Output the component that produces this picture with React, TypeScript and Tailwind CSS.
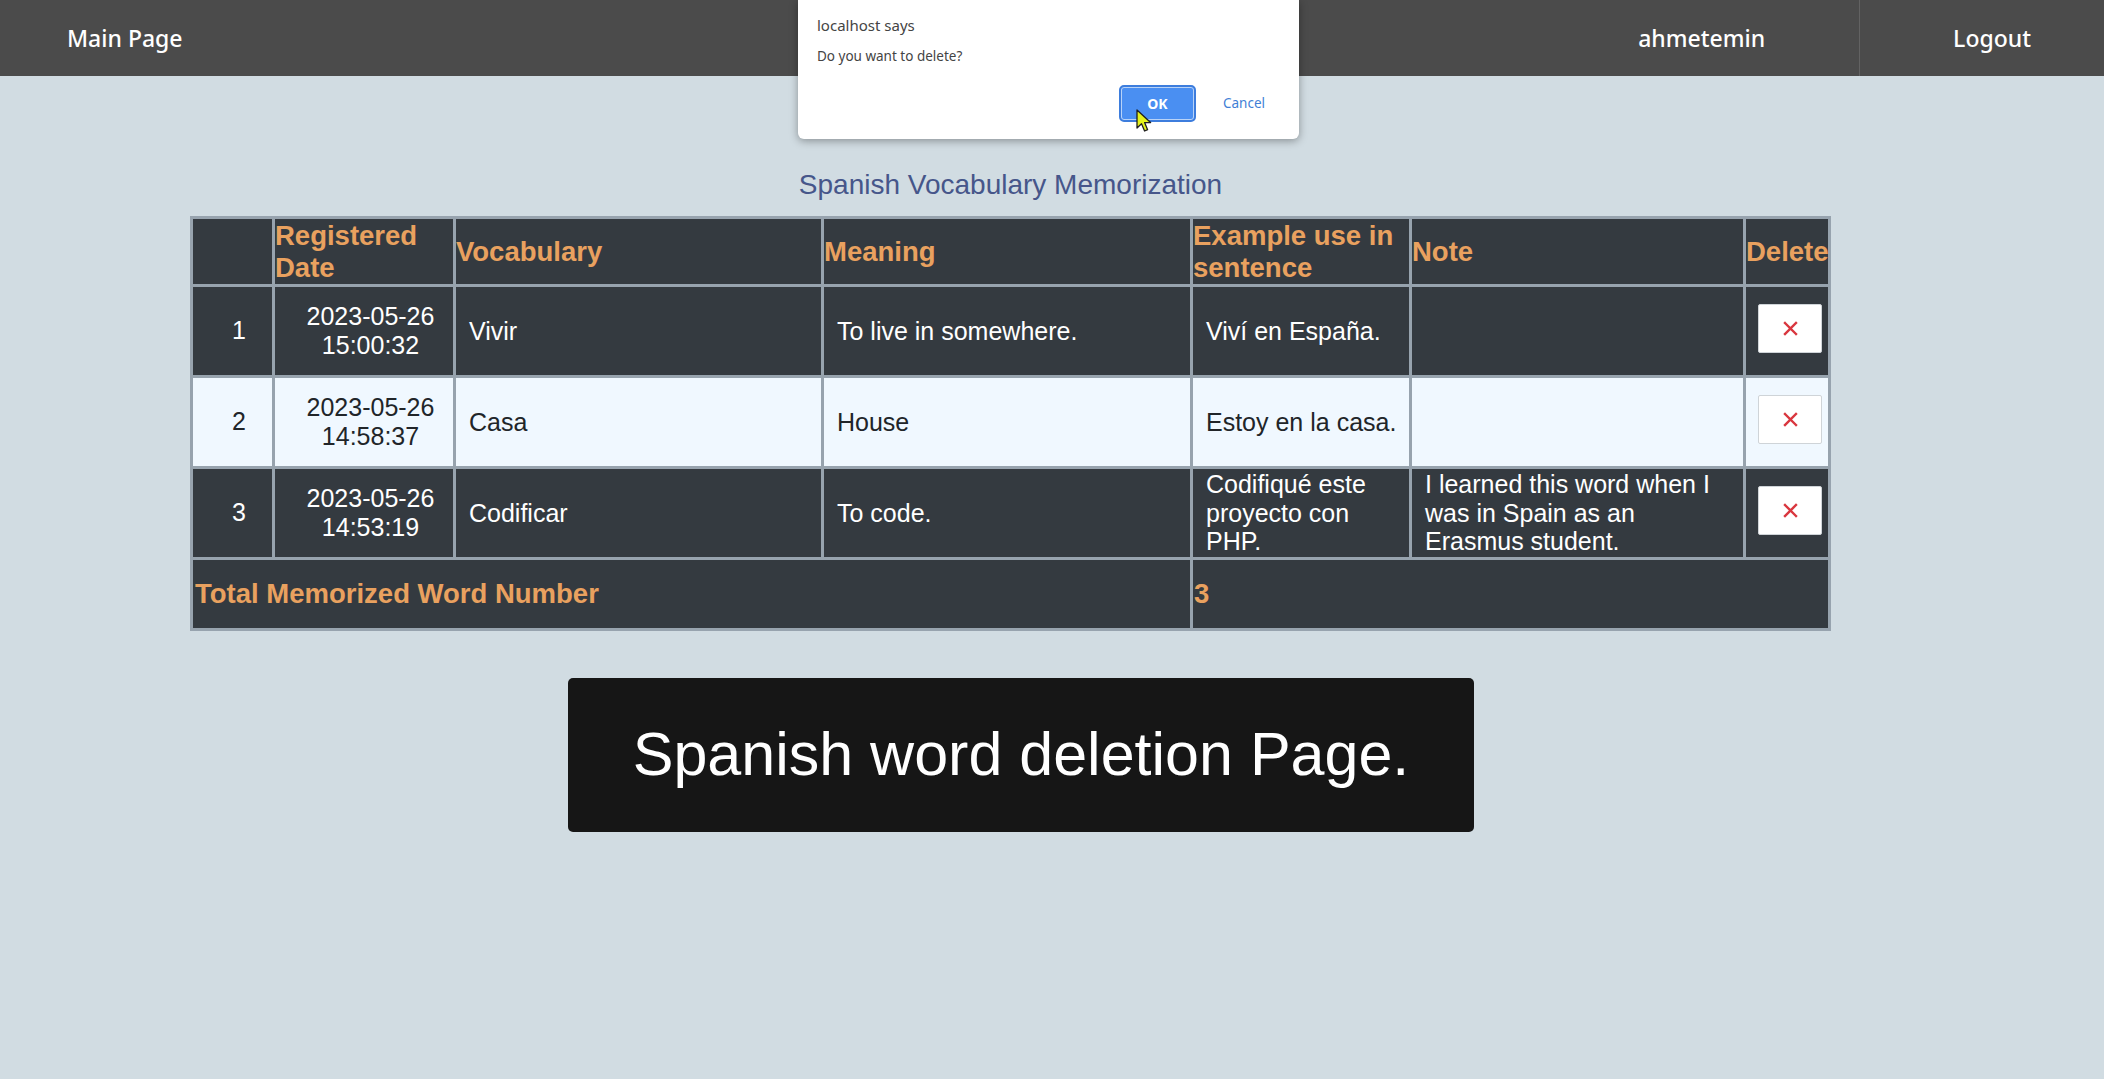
import React from 'react';

type Row = {
  id: number;
  date: string;
  word: string;
  meaning: string;
  example: string;
  note: string;
};

const rows: Row[] = [
  { id: 1, date: '2023-05-26 15:00:32', word: 'Vivir', meaning: 'To live in somewhere.', example: 'Viví en España.', note: '' },
  { id: 2, date: '2023-05-26 14:58:37', word: 'Casa', meaning: 'House', example: 'Estoy en la casa.', note: '' },
  {
    id: 3,
    date: '2023-05-26 14:53:19',
    word: 'Codificar',
    meaning: 'To code.',
    example: 'Codifiqué este proyecto con PHP.',
    note: 'I learned this word when I was in Spain as an Erasmus student.',
  },
];

function Cursor() {
  return (
    <svg className="absolute left-[337px] top-[108px]" width="20" height="26" viewBox="0 0 20 26">
      <path
        d="M2 2 L2 20 L6.5 15.8 L9.6 23 L12.6 21.7 L9.6 14.6 L15.6 14.6 Z"
        fill="#e4f21c"
        stroke="#1e1e1e"
        strokeWidth="1.3"
        strokeLinejoin="round"
      />
    </svg>
  );
}

function ConfirmDialog() {
  return (
    <div className="absolute left-[798px] top-0 h-[139px] w-[501px] rounded-b-[6px] bg-white shadow-[0_2px_8px_rgba(0,0,0,0.35)] font-['Noto_Sans',sans-serif]">
      <div className="pl-[19px] pt-[14px] text-[15px] leading-[22px] text-[#444]">localhost says</div>
      <div className="pl-[19px] pt-[10px] text-[13.5px] leading-[20px] text-[#444]">Do you want to delete?</div>
      <div className="mt-[19px] flex items-center justify-end pr-[34px]">
        <div className="flex h-[37px] w-[77px] items-center justify-center rounded-[5px] border-2 border-[#3d7ddd] bg-[#4a8ff2] text-[14px] font-bold text-white shadow-[inset_0_0_0_1px_#b8d3f8]">
          OK
        </div>
        <div className="ml-[27px] text-[13.5px] text-[#3f7fd6]">Cancel</div>
      </div>
      <Cursor />
    </div>
  );
}

function Header() {
  return (
    <header className="flex h-[76px] items-center bg-[#4b4b4b] font-['Noto_Sans',sans-serif] text-[23px] font-medium text-white">
      <a className="pl-[67px]">Main Page</a>
      <div className="ml-auto flex h-full items-center">
        <a className="flex h-full items-center px-[94px]">ahmetemin</a>
        <a className="flex h-full items-center border-l border-[#626262] pl-[93px] pr-[73px]">Logout</a>
      </div>
    </header>
  );
}

function DeleteButton() {
  return (
    <button className="mb-[6px] flex h-[49px] w-[64px] items-center justify-center rounded-[2px] border border-[#cfd4d8] bg-white">
      <svg width="15" height="15" viewBox="0 0 15 15">
        <path d="M2 2 L13 13 M13 2 L2 13" stroke="#d9363e" strokeWidth="2.4" strokeLinecap="square" />
      </svg>
    </button>
  );
}

function VocabTable() {
  const th = 'flex h-[65px] items-center bg-[#343a40] text-[27.5px] font-bold leading-[1.15] text-[#e9a15f]';
  return (
    <div className="grid grid-cols-[79px_178px_365px_366px_216px_331px_82px] gap-[3px] bg-[#97a3ae] p-[3px] font-['Liberation_Sans',Arial,sans-serif]">
      <div className={th}></div>
      <div className={th}>Registered Date</div>
      <div className={th}>Vocabulary</div>
      <div className={th}>Meaning</div>
      <div className={th}>Example use in sentence</div>
      <div className={th}>Note</div>
      <div className={th}>Delete</div>

      {rows.map((r, i) => {
        const light = i % 2 === 1;
        const cell = `flex min-h-[88px] items-center pl-[13px] pr-[8px] text-[25px] leading-[1.15] ${
          light ? 'bg-[#f0f8ff] text-[#212529]' : 'bg-[#343a40] text-white'
        }`;
        return (
          <React.Fragment key={r.id}>
            <div className={`flex items-center justify-center pl-[13px] text-[25px] ${light ? 'bg-[#f0f8ff] text-[#212529]' : 'bg-[#343a40] text-white'}`}>
              {r.id}
            </div>
            <div className={`flex items-center justify-center pl-[13px] text-center text-[25px] leading-[1.15] ${light ? 'bg-[#f0f8ff] text-[#212529]' : 'bg-[#343a40] text-white'}`}>
              {r.date}
            </div>
            <div className={cell}>{r.word}</div>
            <div className={cell}>{r.meaning}</div>
            <div className={cell}>{r.example}</div>
            <div className={cell}>{r.note}</div>
            <div className={`flex items-center justify-center pl-[6px] ${light ? 'bg-[#f0f8ff]' : 'bg-[#343a40]'}`}>
              <DeleteButton />
            </div>
          </React.Fragment>
        );
      })}

      <div className="col-span-4 flex h-[68px] items-center bg-[#343a40] pl-[2px] text-[27.5px] font-bold text-[#e9a15f]">
        Total Memorized Word Number
      </div>
      <div className="col-span-3 flex h-[68px] items-center bg-[#343a40] pl-[1px] text-[27.5px] font-bold text-[#e9a15f]">
        3
      </div>
    </div>
  );
}

export default function App() {
  return (
    <div className="relative min-h-[1079px] bg-[#d1dce2]">
      <Header />
      <main className="pb-10">
        <div className="ml-[190px] w-[1641px]">
          <h2 className="mt-[93px] h-[32px] text-center font-['Liberation_Sans',Arial,sans-serif] text-[28px] leading-[32px] text-[#46568a]">
            Spanish Vocabulary Memorization
          </h2>
          <div className="mt-[15px]">
            <VocabTable />
          </div>
        </div>
        <div className="ml-[568px] mt-[47px] flex h-[154px] w-[906px] items-center justify-center rounded-[5px] bg-[#161616] font-['Liberation_Sans',Arial,sans-serif] text-[61px] text-white">
          Spanish word deletion Page.
        </div>
      </main>
      <ConfirmDialog />
    </div>
  );
}
